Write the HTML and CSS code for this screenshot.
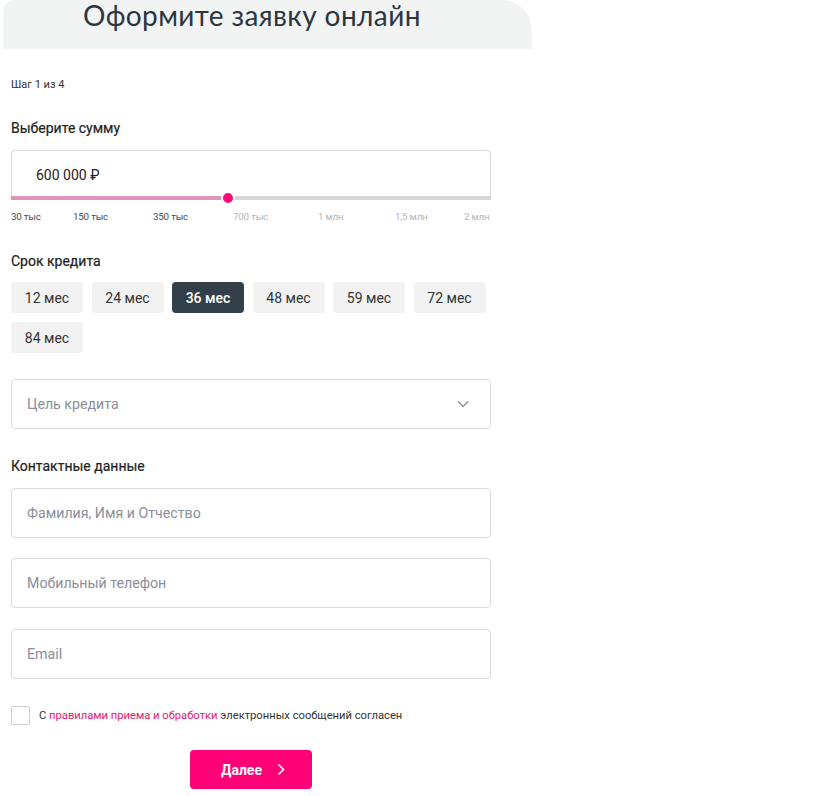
FILE: index.html
```html
<!DOCTYPE html>
<html lang="ru">
<head>
<meta charset="utf-8">
<title>Оформите заявку онлайн</title>
<link rel="stylesheet" href="styles.css">
</head>
<body>
<div class="page">
  <header class="head">
    <h1 class="title">Оформите заявку онлайн</h1>
  </header>
  <form class="form">
    <div class="step">Шаг 1 из 4</div>

    <div class="label label-sum">Выберите сумму</div>
    <div class="sum">
      <div class="sum-value">600 000 ₽</div>
      <div class="track">
        <div class="track-fill" style="width:45.2%"></div>
        <div class="thumb" style="left:45.2%"></div>
      </div>
    </div>
    <div class="ticks">
      <span class="tick on" style="left:0">30 тыс</span>
      <span class="tick on" style="left:62px">150 тыс</span>
      <span class="tick on" style="left:142px">350 тыс</span>
      <span class="tick" style="left:222px">700 тыс</span>
      <span class="tick" style="left:307px">1 млн</span>
      <span class="tick" style="left:384px">1,5 млн</span>
      <span class="tick" style="left:453px">2 млн</span>
    </div>

    <div class="label label-term">Срок кредита</div>
    <div class="chips">
      <button type="button" class="chip">12 мес</button>
      <button type="button" class="chip">24 мес</button>
      <button type="button" class="chip active">36 мес</button>
      <button type="button" class="chip">48 мес</button>
      <button type="button" class="chip">59 мес</button>
      <button type="button" class="chip">72 мес</button>
      <button type="button" class="chip">84 мес</button>
    </div>

    <div class="field select">
      <span class="ph">Цель кредита</span>
      <svg class="chev" width="12" height="8" viewBox="0 0 12 8"><path d="M1 1.5l5 5 5-5" fill="none" stroke="#8a8f99" stroke-width="1.4"/></svg>
    </div>

    <div class="label label-contact">Контактные данные</div>
    <div class="fields">
      <div class="field"><span class="ph">Фамилия, Имя и Отчество</span></div>
      <div class="field"><span class="ph">Мобильный телефон</span></div>
      <div class="field"><span class="ph">Email</span></div>
    </div>

    <label class="agree">
      <span class="box"></span>
      <span class="agree-text">С <a href="#" class="link">правилами приема и обработки</a> электронных сообщений согласен</span>
    </label>

    <div class="actions">
      <button type="button" class="next">Далее
        <svg width="8" height="13" viewBox="0 0 8 13"><path d="M1.5 1.5l5 5-5 5" fill="none" stroke="#fff" stroke-width="1.6"/></svg>
      </button>
    </div>
  </form>
</div>
</body>
</html>
```

FILE: styles.css
```css
* { box-sizing: border-box; }
html, body { margin: 0; padding: 0; background: #fff; }
body {
  font-family: Roboto, "Liberation Sans", Arial, sans-serif;
  color: #333;
}
.page { width: 825px; }

.head {
  margin-left: 3px;
  width: 529px;
  height: 49px;
  background: #f2f3f3;
  border-radius: 12px 30px 0 0;
  padding-left: 80px;
  padding-top: 1px;
}
.title {
  margin: 0;
  font-family: Lato, "Noto Sans", sans-serif;
  font-weight: 400;
  font-size: 28px;
  line-height: 28px;
  letter-spacing: 0.4px;
  color: #2b3642;
}

.form { padding-left: 11px; width: 491px; }

.step {
  margin-top: 29px;
  font-size: 11px;
  line-height: 14px;
  color: #333;
}

.label {
  font-size: 14px;
  font-weight: 400;
  line-height: 18px;
  color: #222;
  -webkit-text-stroke: 0.2px #222;
}
.label-sum { margin-top: 27px; }
.label-term { margin-top: 21px; }
.label-contact { margin-top: 28px; }

.sum {
  position: relative;
  margin-top: 13px;
  height: 50px;
  border: 1px solid #dcdcdc;
  border-bottom: none;
  border-radius: 4px 4px 0 0;
}
.sum-value {
  padding: 15px 0 0 24px;
  font-size: 14px;
  line-height: 18px;
  color: #222;
}
.track {
  position: absolute;
  left: -1px;
  right: -1px;
  bottom: 0;
  height: 4px;
  background: #d6d6d8;
  border-radius: 0 0 2px 2px;
}
.track-fill {
  height: 4px;
  background: #e092b8;
}
.thumb {
  position: absolute;
  top: -5px;
  width: 14px;
  height: 14px;
  margin-left: -7px;
  border-radius: 50%;
  background: #ff0a78;
  border: 2px solid #fff;
}

.ticks {
  position: relative;
  height: 20px;
  margin-top: 11px;
}
.tick {
  position: absolute;
  top: 0;
  font-size: 9.8px;
  line-height: 12px;
  letter-spacing: -0.2px;
  color: #b5b5b8;
  white-space: nowrap;
}
.tick.on { color: #4a4a4a; }

.chips {
  margin-top: 12px;
  display: flex;
  flex-wrap: wrap;
  gap: 9px 8.5px;
  width: 480px;
}
.chip {
  width: 72px;
  height: 31px;
  border: none;
  border-radius: 4px;
  background: #f2f2f2;
  font-family: Roboto, "Liberation Sans", sans-serif;
  font-size: 14px;
  color: #333;
  padding: 0;
  cursor: pointer;
}
.chip.active {
  background: #333f49;
  color: #fff;
  font-weight: 500;
}

.field {
  display: flex;
  align-items: center;
  height: 50px;
  width: 480px;
  border: 1px solid #dcdcdc;
  border-radius: 4px;
  padding-left: 15px;
  padding-right: 21px;
}
.ph {
  font-size: 14.2px;
  color: #8a8f99;
}
.select {
  margin-top: 26px;
  justify-content: space-between;
}
.fields {
  margin-top: 13px;
  display: flex;
  flex-direction: column;
  gap: 20px;
}
.fields .field:last-child { margin-top: 1px; }

.agree {
  margin-top: 27px;
  display: flex;
  align-items: center;
  gap: 9px;
  cursor: pointer;
}
.box {
  width: 19px;
  height: 19px;
  border: 1px solid #cfcfcf;
  border-radius: 2px;
  background: #fff;
}
.agree-text {
  font-size: 11.2px;
  color: #333;
}
.link { color: #e8176f; text-decoration: none; }

.actions {
  margin-top: 25px;
  padding-left: 179px;
}
.next {
  display: flex;
  align-items: center;
  justify-content: center;
  gap: 15px;
  width: 122px;
  height: 39px;
  border: none;
  border-radius: 4px;
  background: #ff0077;
  color: #fff;
  font-family: Roboto, "Liberation Sans", sans-serif;
  font-weight: 700;
  font-size: 14px;
  padding: 0 0 0 4px;
  cursor: pointer;
}
```
